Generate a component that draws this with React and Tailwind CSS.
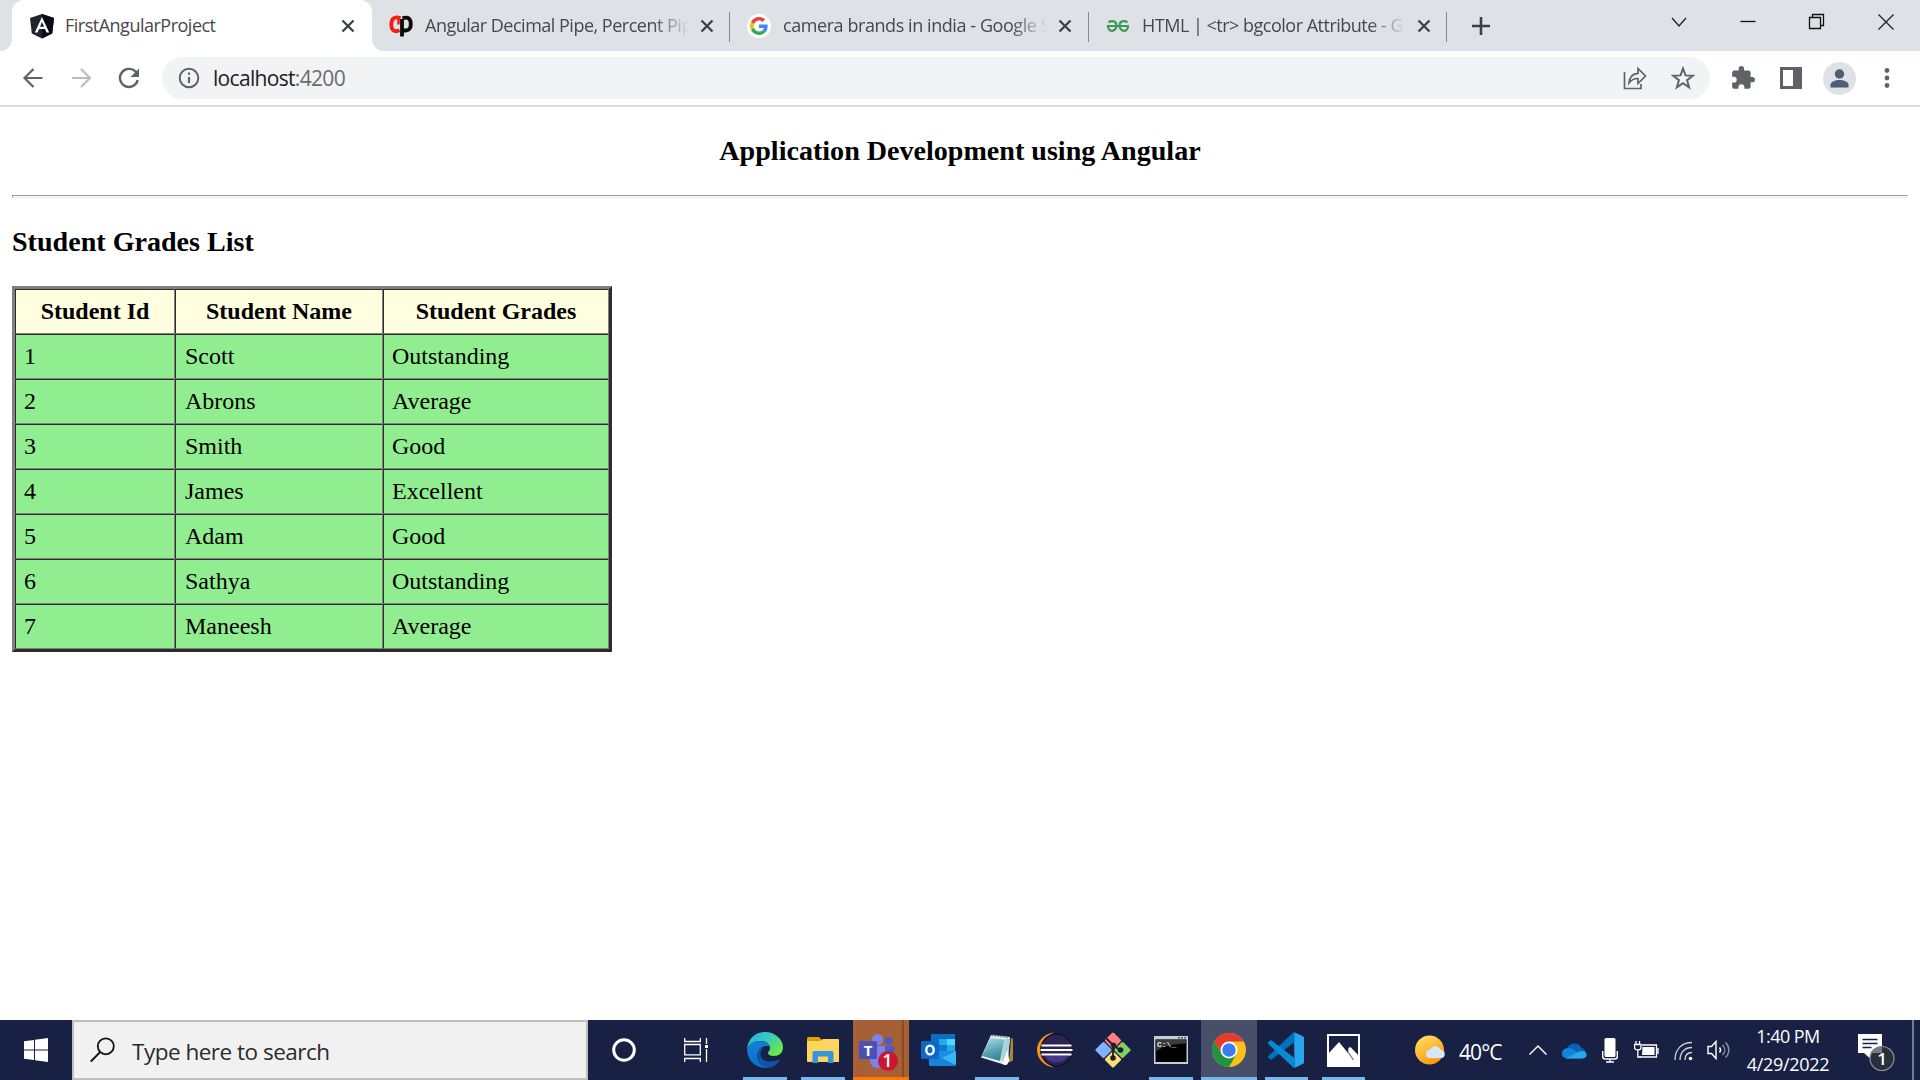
import React from "react";

const UI = "font-['Open_Sans',sans-serif]";

function Close({ cls = "" }) {
  return (
    <svg className={"shrink-0 " + cls} width="14" height="14" viewBox="0 0 14 14" stroke="#3c4043" strokeWidth="2.3" fill="none">
      <path d="M1.500 1.500l11 11M12.500 1.500l-11 11" />
    </svg>
  );
}

function Angular() {
  return (
    <svg width="26" height="26" viewBox="0 0 26 26">
      <path d="M13 1L25 5l-1.800 15.500L13 25.500 2.800 20.500 1 5z" fill="#1f2430" />
      <path d="M13 1L25 5l-1.800 15.500L13 25.500z" fill="#070b14" />
      <path d="M13 4L5.800 19.500h2.800l1.400-3.600h6l1.400 3.600h2.800zM13 9l2 4.700h-4z" fill="#fff" fillRule="evenodd" />
    </svg>
  );
}

function CpLogo() {
  return (
    <svg width="24" height="24" viewBox="0 0 24 24" fill="none" strokeWidth="3.800">
      <path d="M11.500 4.200C5 1.800 2.300 5.500 2.300 10.500c0 6 3.200 8.200 8.200 5.800" stroke="#f51d12" />
      <path d="M9.500 2.500v8" stroke="#f51d12" strokeWidth="2.500" />
      <path d="M13 22.500V5M13.500 4.200c5.800-2 8.300.8 8.300 6s-3.500 7.600-8.300 5.600" stroke="#0b0b0b" />
    </svg>
  );
}

function Google() {
  return (
    <svg width="24" height="24" viewBox="0 0 24 24">
      <circle cx="12" cy="12" r="12" fill="#fff" />
      <g transform="translate(3 3) scale(.375)">
        <path fill="#EA4335" d="M24 9.500c3.540 0 6.710 1.220 9.210 3.600l6.850-6.850C35.900 2.380 30.470 0 24 0 14.620 0 6.510 5.380 2.560 13.220l7.980 6.190C12.430 13.720 17.740 9.500 24 9.500z" />
        <path fill="#4285F4" d="M46.980 24.550c0-1.570-.15-3.090-.38-4.550H24v9.020h12.940c-.58 2.960-2.260 5.480-4.780 7.180l7.730 6c4.510-4.180 7.090-10.360 7.090-17.650z" />
        <path fill="#FBBC05" d="M10.530 28.590A14.500 14.500 0 0 1 9.770 24c0-1.600.27-3.140.76-4.590l-7.980-6.190A23.900 23.900 0 0 0 0 24c0 3.880.92 7.540 2.560 10.780z" />
        <path fill="#34A853" d="M24 48c6.480 0 11.930-2.130 15.890-5.810l-7.730-6c-2.150 1.450-4.920 2.300-8.160 2.300-6.260 0-11.570-4.220-13.470-9.910l-7.980 6.190C6.510 42.620 14.620 48 24 48z" />
      </g>
    </svg>
  );
}

function Geeks() {
  return (
    <svg width="24" height="24" viewBox="0 0 24 24" fill="none" stroke="#3f9855" strokeWidth="2.200">
      <path d="M1 12h22M2.500 8.300C4 7 9 6 10.300 10c.8 2.800-.5 6.500-4 6.800-2.800.2-4.300-1.800-4.300-4.800M21.500 8.300C20 7 15 6 13.700 10c-.8 2.800.5 6.500 4 6.800 2.800.2 4.300-1.800 4.300-4.800" />
    </svg>
  );
}

function Tab({ icon, title, cls, textCls }) {
  return (
    <div className={"relative flex h-[51px] items-center pl-[17px] pt-[1px] " + cls}>
      <div className="flex w-6 shrink-0 justify-center">{icon}</div>
      <div className={"-mt-[2px] ml-3 w-[265px] whitespace-nowrap text-[18px] leading-6 text-[#45484c] [mask-image:linear-gradient(to_right,#000_228px,transparent_264px)] " + textCls}>{title}</div>
      <Close cls="ml-[10px]" />
      <span className="absolute right-0 top-[12px] h-[30px] w-[1.500px] bg-[#878a8e]" />
    </div>
  );
}

function TabStrip() {
  return (
    <div className={"flex h-[51px] bg-[#dee1e6] " + UI}>
      <div className="relative ml-3 flex h-[51px] w-[360px] items-center rounded-t-[12px] bg-white pl-[17px] pt-[1px]">
        <svg className="absolute -left-3 bottom-0" width="12" height="12"><path d="M12 0v12H0A12 12 0 0 0 12 0z" fill="#fff" /></svg>
        <svg className="absolute -right-3 bottom-0" width="12" height="12"><path d="M0 0v12h12A12 12 0 0 1 0 0z" fill="#fff" /></svg>
        <Angular />
        <div className="-mt-[2px] ml-[10px] w-[264px] whitespace-nowrap text-[18px] leading-6 tracking-[-0.500px] text-[#45484c]">FirstAngularProject</div>
        <Close cls="ml-[12px]" />
      </div>
      <Tab cls="w-[358px]" textCls="tracking-[-0.500px]" icon={<CpLogo />} title="Angular Decimal Pipe, Percent Pip" />
      <Tab cls="w-[359px]" textCls="tracking-[-0.430px]" icon={<Google />} title="camera brands in india - Google S" />
      <Tab cls="w-[358px]" textCls="tracking-[-0.500px]" icon={<Geeks />} title="HTML | <tr> bgcolor Attribute - G" />
      <svg className="ml-[24px] mt-[16px]" width="20" height="20" stroke="#3c4043" strokeWidth="2.600"><path d="M10 1v18M1 10h18" /></svg>
      <div className="ml-auto mr-[25px] mt-[13px] flex gap-[51px]">
        <svg width="18" height="18" fill="none" stroke="#222" strokeWidth="1.300"><path d="M2 5l7 8 7-8" /></svg>
        <svg width="18" height="18" stroke="#111" strokeWidth="1.300"><path d="M1.500 8.500h15" /></svg>
        <svg width="18" height="18" fill="none" stroke="#111" strokeWidth="1.300"><path d="M1.500 4.500h11v11h-11zM4.500 4.500v-3h11v11h-3" /></svg>
        <svg width="18" height="18" stroke="#222" strokeWidth="1.300"><path d="M1.500 1.500l15 15M16.500 1.500l-15 15" /></svg>
      </div>
    </div>
  );
}

function Toolbar() {
  return (
    <div className={"flex h-[56px] items-center border-b-2 border-[#dadcdf] bg-white pl-[21px] pr-[21px] " + UI}>
      <svg width="24" height="24" fill="none" stroke="#5f6368" strokeWidth="2.200"><path d="M21.500 12H3.500M12.500 3l-9 9 9 9" /></svg>
      <svg className="ml-6" width="24" height="24" fill="none" stroke="#babcbe" strokeWidth="2.200"><path d="M3 12h18M12 3l9 9-9 9" /></svg>
      <svg className="ml-6" width="24" height="24" fill="none" stroke="#5f6368" strokeWidth="2.400"><path d="M19.500 7A9 9 0 1 0 20.700 14" /><path d="M22 2.500v8.500h-8.500z" fill="#5f6368" stroke="none" /></svg>
      <div className="ml-[21px] flex h-[42px] w-[1548px] items-center rounded-full bg-[#f1f3f4] pl-[16px] pr-[15px]">
        <svg width="22" height="22" fill="none" stroke="#5f6368" strokeWidth="2"><circle cx="11" cy="11" r="9.300" /><path d="M11 10v6M11 5.500v2.300" strokeWidth="2.200" /></svg>
        <div className="ml-[13px] text-[21px] leading-[30px] tracking-[-0.680px] text-[#202124]">localhost<span className="text-[#686c70]">:4200</span></div>
        <svg className="ml-auto" width="24" height="24" fill="none" stroke="#5f6368" strokeWidth="1.700">
          <path d="M1.500 6v16.500h16.500V18M6 17c.5-6 4-9.500 9-9.700V2.500l7.500 7.500-7.500 7.500V12.500c-4-.2-6.500 1.300-9 4.500z" />
        </svg>
        <svg className="ml-6" width="24" height="24" fill="none" stroke="#5f6368" strokeWidth="2"><path d="M12 2.500l2.500 6.900 7.300.3-5.700 4.500 2 7.100-6.100-4.100-6.100 4.100 2-7.100-5.700-4.500 7.300-.3z" /></svg>
      </div>
      <svg className="ml-[20px]" width="26" height="26" viewBox="0 0 24 24" fill="#5f6368"><path d="M20.500 11H19V7c0-1.100-.9-2-2-2h-4V3.500a2.500 2.500 0 0 0-5 0V5H4c-1.100 0-2 .9-2 2v3.800h1.500a2.700 2.700 0 0 1 0 5.400H2V20c0 1.100.9 2 2 2h3.800v-1.500a2.700 2.700 0 0 1 5.400 0V22H17c1.100 0 2-.9 2-2v-4h1.500a2.500 2.500 0 0 0 0-5z" /></svg>
      <svg className="ml-[24px]" width="22" height="22"><path d="M0 0h22v22H0zM3 3v16h10V3z" fillRule="evenodd" fill="#5f6368" /></svg>
      <svg className="ml-[21px]" width="33" height="33"><circle cx="16.500" cy="16.500" r="16.500" fill="#dee1e6" /><circle cx="16.500" cy="12" r="4.700" fill="#4f5d75" /><path d="M7.500 25.500v-2.500c0-3.500 5-5 9-5s9 1.500 9 5v2.500z" fill="#4f5d75" /></svg>
      <svg className="ml-auto" width="24" height="24" fill="#5f6368"><circle cx="12" cy="4.500" r="2.400" /><circle cx="12" cy="12" r="2.400" /><circle cx="12" cy="19.500" r="2.400" /></svg>
    </div>
  );
}

const students = [
  [1, "Scott", "Outstanding"],
  [2, "Abrons", "Average"],
  [3, "Smith", "Good"],
  [4, "James", "Excellent"],
  [5, "Adam", "Good"],
  [6, "Sathya", "Outstanding"],
  [7, "Maneesh", "Average"],
];

const cell = "h-[45px] border border-b-[#808080] border-l-[#2c2c2c] border-r-[#808080] border-t-[#2c2c2c] px-2 py-0 leading-[27px]";

function Page() {
  return (
    <main className="flex-1 px-3 font-['Liberation_Serif',serif] text-[24px] text-black">
      <h3 className="pt-[28px] text-center text-[28.080px] font-bold leading-[32px]">Application Development using Angular</h3>
      <div className="mt-[28px] h-[3px] border border-b-[#ececec] border-l-[#9a9a9a] border-r-[#ececec] border-t-[#9a9a9a]" />
      <h3 className="mt-[28px] text-[28.080px] font-bold leading-[32px]">Student Grades List</h3>
      <table className="mt-[28px] w-[600px] table-fixed border-separate border-spacing-0 border-[3px] border-b-[#2c2c2c] border-l-[#808080] border-r-[#2c2c2c] border-t-[#808080]">
        <colgroup>
          <col className="w-[160px]" />
          <col className="w-[208px]" />
          <col className="w-[226px]" />
        </colgroup>
        <thead>
          <tr className="bg-[#ffffe0]">
            <th className={cell}>Student Id</th>
            <th className={cell}>Student Name</th>
            <th className={cell}>Student Grades</th>
          </tr>
        </thead>
        <tbody>
          {students.map((s) => (
            <tr key={s[0]} className="bg-[#90ee90]">
              {s.map((v, i) => (
                <td key={i} className={cell}>{i === 1 ? <span className="ml-px">{v}</span> : v}</td>
              ))}
            </tr>
          ))}
        </tbody>
      </table>
    </main>
  );
}

function Edge() {
  return (
    <svg width="36" height="36" viewBox="0 0 36 36">
      <defs>
        <linearGradient id="e1" x1="0" y1="0" x2="1" y2=".6"><stop offset="0" stopColor="#2ba7e0" /><stop offset=".5" stopColor="#35c8c4" /><stop offset="1" stopColor="#6be84a" /></linearGradient>
        <linearGradient id="e2" x1="0" y1="0" x2="0" y2="1"><stop offset="0" stopColor="#1480d0" /><stop offset="1" stopColor="#0a6fd2" /></linearGradient>
      </defs>
      <path d="M0 17C1 6 9 0 18 0c11 0 18 8 18 15 0 6-4 9-9 9-4 0-6-1-6-3s2-2 2-5c0-4-4-7-10-7C7 9 2 12 0 17z" fill="url(#e1)" />
      <path d="M0 17c2-5 7-8 12-8 7 0 11 3 11 6-7-3-12 2-12 8 0 7 5 11 11 12.500C9 38 0 28 0 17z" fill="url(#e2)" />
      <path d="M18 14.500c-4 2-5.500 7-3.500 11 3 5 11 5 19 1.500C30 33 25 36 20 36 13 34 9.500 29 10 23c.5-5 4-8 8-8.500z" fill="#1053a5" />
      <path d="M22.500 14.500c-4-1-6 3-5 6 1.500 4 6 6 10 5.500-4-.5-6.500-2.500-6.500-5 0-2 2-3 1.500-6.500z" fill="#182144" />
    </svg>
  );
}

function Explorer() {
  return (
    <svg width="32" height="26" viewBox="0 0 32 26">
      <path d="M0 1.500C0 .5.500 0 1.500 0H12l3 3v6H0z" fill="#e2a005" />
      <path d="M0 4h13l3-2h15c.6 0 1 .4 1 1v21c0 .6-.4 1-1 1H1c-.6 0-1-.4-1-1z" fill="#ffd561" />
      <path d="M5.500 26V16c0-1.200.8-2 2-2h17c1.200 0 2 .8 2 2v10H21v-6.500H11V26z" fill="#3595dc" />
    </svg>
  );
}

function Teams() {
  return (
    <svg width="40" height="40" viewBox="0 0 40 40">
      <circle cx="18.500" cy="7.500" r="5.500" fill="#7b83eb" />
      <circle cx="29.500" cy="9" r="4" fill="#5059c9" />
      <path d="M24 14h11v10c0 4-3 6-6 6h-5z" fill="#5059c9" />
      <path d="M11 14h15v14c0 5-3 8-7.500 8S11 33 11 28z" fill="#7b83eb" />
      <rect y="9" width="18" height="18" rx="1.500" fill="#4a51b8" />
      <text x="9" y="23.500" textAnchor="middle" fontSize="15" fontWeight="700" fill="#fff" fontFamily="Open Sans">T</text>
      <circle cx="29" cy="29" r="10" fill="#ca1633" />
      <text x="28.500" y="35" textAnchor="middle" fontSize="18" fontWeight="600" fill="#fff" fontFamily="Open Sans">1</text>
    </svg>
  );
}

function Outlook() {
  return (
    <svg width="36" height="34" viewBox="0 0 36 34">
      <path d="M10 1h24v17H10z" fill="#0a6ec4" />
      <path d="M18 6h8v6h-8z" fill="#28a8ea" /><path d="M26 6h8v6h-8z" fill="#50d9ff" /><path d="M18 12h8v6h-8z" fill="#0f78d4" /><path d="M26 12h8v6h-8z" fill="#28a8ea" />
      <path d="M8 18h27v13.500c0 .8-.7 1.500-1.500 1.500h-24C8.700 33 8 32.300 8 31.500z" fill="#1b8ee0" />
      <path d="M35 18v14L21 25z" fill="#35b8f1" /><path d="M8 20l26.500 12.500-1 .5H9z" fill="#1784d9" />
      <rect y="8" width="18" height="18" rx="1.500" fill="#0f69c4" />
      <ellipse cx="9" cy="17" rx="3.700" ry="4.400" fill="none" stroke="#fff" strokeWidth="2.400" />
    </svg>
  );
}

function Notepad() {
  return (
    <svg width="34" height="34" viewBox="0 0 34 34">
      <defs><linearGradient id="np" x1="0" y1="0" x2=".3" y2="1"><stop offset="0" stopColor="#b5dfe3" /><stop offset=".6" stopColor="#5ba9b5" /><stop offset="1" stopColor="#3b8797" /></linearGradient></defs>
      <path d="M31 5l2 .5v22l-4 2z" fill="#a9843e" />
      <path d="M11 2l19 2-2.500 27-2 1L1 24.500z" fill="#e8f1f2" />
      <path d="M10.500 5l14 1.500-4.500 21.500L2 23z" fill="url(#np)" />
      <path d="M24.500 6.500l5.500-1-3 24-6-1.500z" fill="#a9d2d8" />
      <path d="M11.500 2.500l18 2" stroke="#7a8a8d" strokeWidth="2" strokeDasharray="1.500 1.500" />
      <path d="M22 31l5.500-14 2 11-3 4z" fill="#f7faf9" />
    </svg>
  );
}

function Eclipse() {
  return (
    <svg width="36" height="36" viewBox="0 0 36 36">
      <path d="M17 .5C7 2 0 9 0 18s7 16 17 17.500C9 32 5 26 5 18S9 4 17 .5z" fill="#f7941e" />
      <circle cx="19.500" cy="18" r="16.500" fill="#14111f" /><circle cx="19.500" cy="18" r="15.300" fill="#2c2255" />
      <path d="M8 24h23c-2 4-6 6-11.500 6S10 28 8 24z" fill="#473788" />
      <path d="M4.500 13.500h30M3.500 18h32M4.500 22.500h30" stroke="#fff" strokeWidth="2" />
    </svg>
  );
}

function Git() {
  return (
    <svg width="36" height="36" viewBox="0 0 36 36">
      <g transform="rotate(45 18 18)">
        <rect x="5.200" y="5.200" width="12.200" height="12.200" rx="1.500" fill="#ff7f7f" />
        <rect x="18.600" y="5.200" width="12.200" height="12.200" rx="1.500" fill="#7dd35e" />
        <rect x="18.600" y="18.600" width="12.200" height="12.200" rx="1.500" fill="#ffdf76" />
        <rect x="5.200" y="18.600" width="12.200" height="12.200" rx="1.500" fill="#80b3ff" />
      </g>
      <path d="M11.500 6.500L18 13v13M18 13l7 5" stroke="#241c24" strokeWidth="1.800" fill="none" />
      <circle cx="18.500" cy="13" r="2.600" fill="#241c24" /><circle cx="18" cy="26" r="2.800" fill="#241c24" /><circle cx="25.500" cy="18" r="2.800" fill="#241c24" />
    </svg>
  );
}

function Cmd() {
  return (
    <svg width="34" height="28" viewBox="0 0 34 28">
      <rect width="34" height="28" fill="#c7cdd2" /><rect x="1.500" y="3.500" width="31" height="22.500" fill="#000" />
      <path d="M1.500 3.500h31v4C18 8 8 10 1.500 16z" fill="#3b3b3b" />
      <path d="M24 1.800h8" stroke="#51606d" strokeWidth="1.400" strokeDasharray="2 1" />
      <text x="3" y="11" fontSize="8" fontWeight="700" fill="#e8e8e8" fontFamily="Liberation Mono">C:\_</text>
    </svg>
  );
}

function Chrome() {
  return (
    <svg width="34" height="34" viewBox="0 0 48 48">
      <circle cx="24" cy="24" r="24" fill="#fbc116" />
      <path d="M3.200 12A24 24 0 0 1 44.800 12H24L13.600 30z" fill="#e33b2e" />
      <path d="M3.200 12A24 24 0 0 0 24 48L34.400 30 24 36 13.600 30z" fill="#229342" />
      <circle cx="24" cy="24" r="12" fill="#fff" /><circle cx="24" cy="24" r="9.500" fill="#3a7df0" />
    </svg>
  );
}

function Code() {
  return (
    <svg width="36" height="36" viewBox="0 0 36 36">
      <path d="M26 .2L34.500 4c1 .5 1.500 1.200 1.500 2.200V30c0 1-.5 1.600-1.500 2.100L26.500 36z" fill="#27a5ee" />
      <path d="M26.500 0v10L4 27.300c-.8.600-1.500.5-2.100 0L.6 26c-.8-.8-.8-1.600 0-2.300L25 .8z" fill="#0072bd" />
      <path d="M26.500 36V26L4 8.800c-.8-.6-1.500-.5-2.100 0L.6 10c-.8.800-.8 1.600 0 2.300L25 35.300z" fill="#078ad6" />
    </svg>
  );
}

function Photos() {
  return (
    <svg width="33" height="33" viewBox="0 0 33 33">
      <path d="M1 1h31v31H1z" fill="none" stroke="#fff" strokeWidth="2" />
      <path d="M1 20L12 8l9 11 .5-5 2-1 8.500 9v10H1z" fill="#fff" />
      <path d="M21 18l5.500 8" stroke="#6d7490" strokeWidth="1.200" />
    </svg>
  );
}

function TaskItem({ children, w, line, lineCls = "bg-[#76b9ed]", cls = "" }) {
  return (
    <div className={"relative flex h-[60px] shrink-0 items-center justify-center " + w + " " + cls}>
      {children}
      {line && <span className={"absolute bottom-0 h-[3px] " + line + " " + lineCls} />}
    </div>
  );
}

function Taskbar() {
  return (
    <footer className={"flex h-[60px] items-center bg-[#182144] text-white " + UI}>
      <div className="flex w-[72px] justify-center">
        <svg width="24" height="24" viewBox="0 0 24 24" fill="#fff"><path d="M0 3.300L10 1.900V11.500H0zM11 1.800L24 0v11.500H11zM0 12.500h10v9.600L0 20.700zM11 12.500h13V24l-13-1.800z" /></svg>
      </div>
      <div className="flex h-[60px] w-[516px] items-center border-2 border-[#bfbfbf] bg-[#f1f1f1] pl-4">
        <svg width="26" height="26" fill="none" stroke="#111" strokeWidth="1.800"><circle cx="15.800" cy="9.300" r="8" /><path d="M10.200 15L.8 24.500" /></svg>
        <span className="ml-4 mt-[3px] text-[22.500px] leading-[30px] tracking-[-0.500px] text-[#2b2b2b]">Type here to search</span>
      </div>
      <TaskItem w="w-[72px]"><svg width="24" height="24"><circle cx="12" cy="12" r="10.300" fill="none" stroke="#fff" strokeWidth="3" /></svg></TaskItem>
      <TaskItem w="w-[72px]"><svg width="25" height="24" fill="none" stroke="#fff" strokeWidth="1.300"><path d="M.7 6.500h15.600v10.300H.7zM.7 0v3.500h15.600V0M.7 24v-3.500h15.600V24M22.500 0v6M22.500 11v13" /><path d="M21 7h3v3h-3z" fill="#fff" stroke="none" /></svg></TaskItem>
      <TaskItem w="w-[66px]" line="w-[44px]"><Edge /></TaskItem>
      <TaskItem w="w-[50px]" line="w-[44px]"><Explorer /></TaskItem>
      <TaskItem w="w-[56px]" cls="ml-[5px] bg-[#a56035]" line="w-[56px]" lineCls="bg-[#ff7800]">
        <span className="absolute right-[5px] top-0 h-[57px] w-[2px] bg-[#8b4b22]" /><div className="mr-1 mt-1"><Teams /></div>
      </TaskItem>
      <TaskItem w="w-[60px]"><Outlook /></TaskItem>
      <TaskItem w="w-[56px]" line="w-[44px]"><Notepad /></TaskItem>
      <TaskItem w="w-[60px]"><Eclipse /></TaskItem>
      <TaskItem w="w-[56px]"><Git /></TaskItem>
      <TaskItem w="w-[60px]" line="w-[44px]"><Cmd /></TaskItem>
      <TaskItem w="w-[56px]" cls="bg-[#484f6b]" line="w-[56px]"><Chrome /></TaskItem>
      <TaskItem w="w-[58px]" line="w-[43px]"><Code /></TaskItem>
      <TaskItem w="w-[56px]" line="w-[43px]"><Photos /></TaskItem>
      <svg className="ml-[44px]" width="31" height="30" viewBox="0 0 31 30">
        <defs><linearGradient id="sn" x1="0" y1="0" x2=".6" y2="1"><stop offset="0" stopColor="#ffe36b" /><stop offset="1" stopColor="#fb9a0c" /></linearGradient></defs>
        <circle cx="14.500" cy="15" r="14.500" fill="url(#sn)" /><path d="M15 23a4 4 0 0 1 0-8 5.500 5.500 0 0 1 10.500 0A4 4 0 0 1 26 23z" fill="#d5e8fb" />
      </svg>
      <span className="ml-[13px] mt-[5px] w-[44px] whitespace-nowrap text-[21px] tracking-[-0.900px]">40°C</span>
      <svg className="ml-[26px]" width="18" height="12" fill="none" stroke="#fff" strokeWidth="1.500"><path d="M.5 10.500L9 2l8.500 8.500" /></svg>
      <svg className="ml-[15px]" width="25" height="17" viewBox="0 0 25 17"><path d="M5 16.500A5 5 0 0 1 5 6.500 8 8 0 0 1 19.500 6 5.500 5.500 0 0 1 20 16.500z" fill="#0a63b8" /><path d="M5 6.500c3-1.300 5 0 14 6l-13 4H5a5 5 0 0 1 0-10z" fill="#1283d8" /><path d="M4 16.200l10-5c4-2.500 7-2.700 9.500-1 2.500 3 .5 6.300-3.500 6.300H5z" fill="#28a8ea" /></svg>
      <svg className="ml-[15px]" width="16" height="25" fill="none" stroke="#fff" strokeWidth="1.400"><rect x="2.500" y="0" width="11" height="19" rx="1.500" fill="#fff" stroke="none" /><path d="M.7 13v5.500c0 1.500 1 2.500 2.500 2.500h9.600c1.500 0 2.500-1 2.500-2.500V13M8 21v3M4 24h8" /></svg>
      <svg className="ml-[16px]" width="25" height="18" fill="none" stroke="#fff" strokeWidth="1.300"><path d="M8 4h14.500v12H5.500M24 7v6" /><path d="M8.500 6h12v8H8z" fill="#fff" stroke="none" /><path d="M2 0v3M5.500 0v3M.5 3.500h6.500v3c0 1.500-1.500 2.500-3.300 2.500S.5 8 .5 6.500zM3.800 9v7h3" /></svg>
      <svg className="ml-[15px] mt-[2px]" width="19" height="20" fill="none" stroke="#fff" strokeWidth="1.300"><path d="M1 19C1 8 8 1.500 18 1.500M6 19C6 11 11 6.500 18 6.500M11 19c0-5 3-7.500 7-7.500" strokeOpacity=".8" /><circle cx="16.500" cy="17.500" r="1.800" fill="#fff" stroke="none" /></svg>
      <svg className="ml-[14px]" width="23" height="20" fill="none" stroke="#fff" strokeWidth="1.400"><path d="M1 6.500h3.500L9 1.500v17l-4.500-5H1z" /><path d="M12.500 7.500c1.300 1.500 1.300 3.500 0 5" /><path d="M15.500 5c3 3 3 7 0 10M18.500 2.500c4.500 4.500 4.500 10.500 0 15" strokeOpacity=".5" /></svg>
      <div className="ml-[12px] w-[92px] whitespace-nowrap text-center text-[18px] leading-[28px] tracking-[-0.300px]">
        <div className="tracking-[-0.550px]">1:40 PM</div>
        <div>4/29/2022</div>
      </div>
      <svg className="ml-[24px] mt-[6px]" width="37" height="38" viewBox="0 0 37 38">
        <path d="M0 0h24v19H13l-1.500 5L6 19H0z" fill="#fff" /><path d="M4.500 5.500h15M4.500 9.500h15M4.500 13.500h9" stroke="#182144" strokeWidth="1.300" />
        <circle cx="24" cy="24.500" r="12" fill="#2b2e3b" stroke="#8d909b" strokeWidth="1.200" />
        <path d="M12.500 19L14 17a12 12 0 0 1 9.500-4.500h.5V19z" fill="#777a83" />
        <text x="24" y="30.500" textAnchor="middle" fontSize="17" fontWeight="600" fill="#fff" fontFamily="Open Sans">1</text>
      </svg>
      <span className="ml-auto mr-[6px] h-[60px] w-[2px] shrink-0 bg-[#747a8f]" />
    </footer>
  );
}

export default function App() {
  return (
    <div className="flex h-[1080px] w-[1920px] flex-col overflow-hidden bg-white">
      <TabStrip />
      <Toolbar />
      <Page />
      <Taskbar />
    </div>
  );
}
